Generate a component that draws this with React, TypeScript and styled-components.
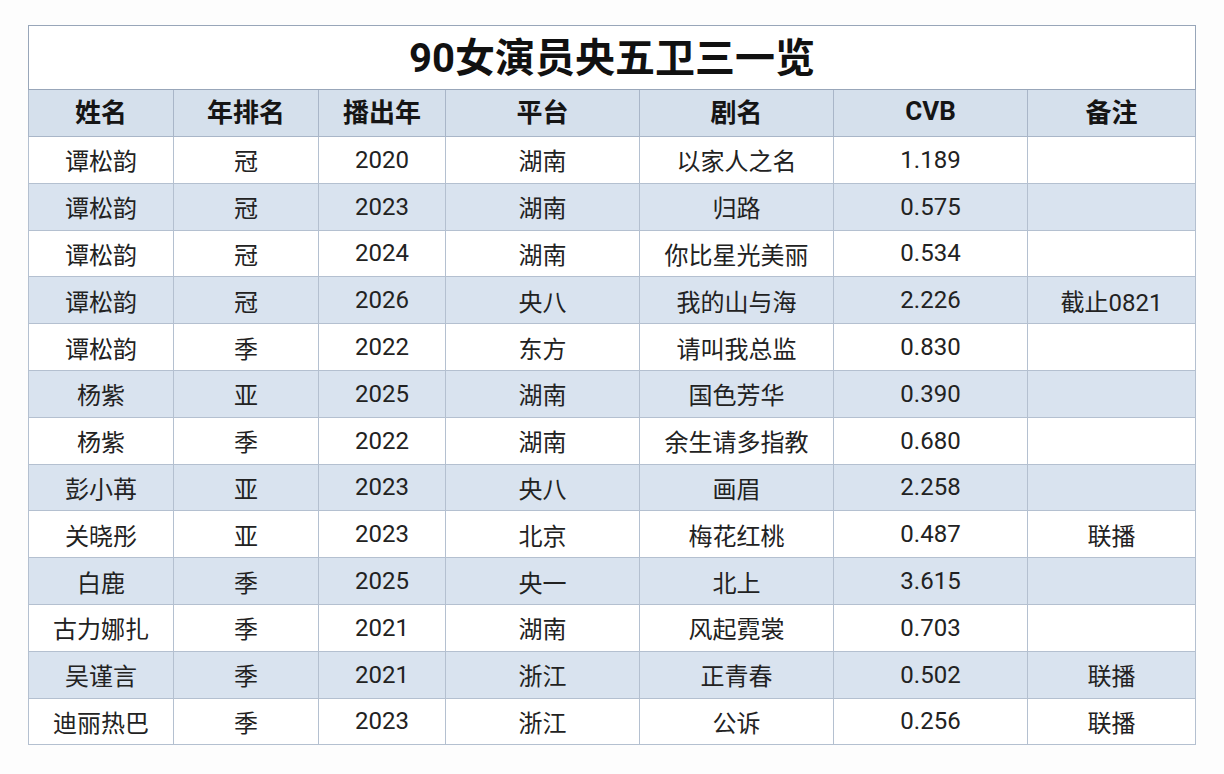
import React from 'react';
import styled, { createGlobalStyle } from 'styled-components';

const GlobalStyle = createGlobalStyle`
  html, body {
    margin: 0;
    padding: 0;
    background: #fdfdfd;
  }
  body {
    font-family: Roboto, 'Noto Sans CJK SC', sans-serif;
    color: #1f1f1f;
  }
`;

const Page = styled.div`
  width: 1224px;
  height: 774px;
  padding: 25px 0 0 28px;
  box-sizing: border-box;
`;

const Table = styled.table`
  width: 1168px;
  border-collapse: collapse;
  table-layout: fixed;
  background: #ffffff;
  border: 1px solid #98a6b9;
`;

const TitleRow = styled.tr`
  height: 63px;
`;

const TitleCell = styled.th`
  font-family: Roboto, 'Noto Sans CJK SC', sans-serif;
  font-weight: 700;
  font-size: 40px;
  color: #111111;
  text-align: center;
  vertical-align: middle;
  padding: 0 0 5px 0;
  border: 1px solid #98a6b9;
`;

const HeadRow = styled.tr`
  height: 47px;
  background: #d5e0ec;
`;

const HeadCell = styled.th`
  font-family: Roboto, 'Noto Sans CJK SC', sans-serif;
  font-weight: 700;
  font-size: 26px;
  color: #151515;
  text-align: center;
  vertical-align: middle;
  padding: 0 0 5px 0;
  border: 1px solid #a9b6c8;
`;

const Row = styled.tr<{ $striped: boolean }>`
  height: 46.8px;
  background: ${(p) => (p.$striped ? '#d9e3ef' : '#ffffff')};
`;

const Cell = styled.td`
  font-family: Roboto, 'Noto Sans CJK SC', sans-serif;
  font-weight: 400;
  font-size: 24px;
  color: #222222;
  text-align: center;
  vertical-align: middle;
  padding: 0;
  border: 1px solid #b4c0d0;
  white-space: nowrap;
`;

const columns = [
  { title: '姓名', width: 145 },
  { title: '年排名', width: 145 },
  { title: '播出年', width: 127 },
  { title: '平台', width: 194 },
  { title: '剧名', width: 194 },
  { title: 'CVB', width: 194 },
  { title: '备注', width: 168 },
];

const rows: string[][] = [
  ['谭松韵', '冠', '2020', '湖南', '以家人之名', '1.189', ''],
  ['谭松韵', '冠', '2023', '湖南', '归路', '0.575', ''],
  ['谭松韵', '冠', '2024', '湖南', '你比星光美丽', '0.534', ''],
  ['谭松韵', '冠', '2026', '央八', '我的山与海', '2.226', '截止0821'],
  ['谭松韵', '季', '2022', '东方', '请叫我总监', '0.830', ''],
  ['杨紫', '亚', '2025', '湖南', '国色芳华', '0.390', ''],
  ['杨紫', '季', '2022', '湖南', '余生请多指教', '0.680', ''],
  ['彭小苒', '亚', '2023', '央八', '画眉', '2.258', ''],
  ['关晓彤', '亚', '2023', '北京', '梅花红桃', '0.487', '联播'],
  ['白鹿', '季', '2025', '央一', '北上', '3.615', ''],
  ['古力娜扎', '季', '2021', '湖南', '风起霓裳', '0.703', ''],
  ['吴谨言', '季', '2021', '浙江', '正青春', '0.502', '联播'],
  ['迪丽热巴', '季', '2023', '浙江', '公诉', '0.256', '联播'],
];

const App: React.FC = () => {
  return (
    <Page>
      <GlobalStyle />
      <Table>
        <colgroup>
          {columns.map((c) => (
            <col key={c.title} style={{ width: c.width }} />
          ))}
        </colgroup>
        <thead>
          <TitleRow>
            <TitleCell colSpan={7}>90女演员央五卫三一览</TitleCell>
          </TitleRow>
          <HeadRow>
            {columns.map((c) => (
              <HeadCell key={c.title}>{c.title}</HeadCell>
            ))}
          </HeadRow>
        </thead>
        <tbody>
          {rows.map((r, i) => (
            <Row key={i} $striped={i % 2 === 1}>
              {r.map((v, j) => (
                <Cell key={j}>{v}</Cell>
              ))}
            </Row>
          ))}
        </tbody>
      </Table>
    </Page>
  );
};

export default App;
